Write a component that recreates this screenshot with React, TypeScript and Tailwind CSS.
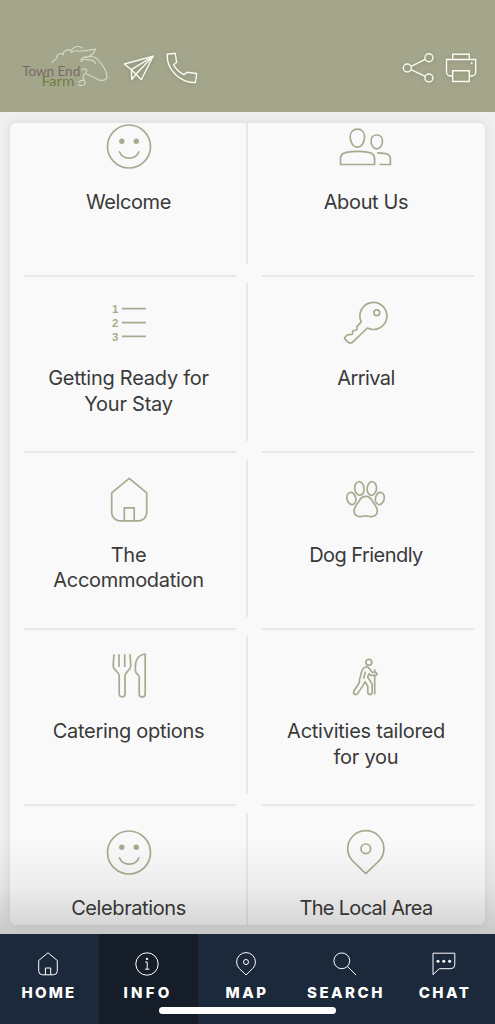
import { ReactNode } from "react";

interface Tile {
  label: string;
  icon: ReactNode;
  tracking: string;
}

interface NavItem {
  label: string;
  icon: ReactNode;
  active?: boolean;
  tracking: string;
}

const Smile = () => (
  <>
    <circle cx="28" cy="23.5" r="21.5" />
    <circle cx="20.8" cy="18.2" r="2.7" fill="currentColor" stroke="none" />
    <circle cx="35.3" cy="18.2" r="2.7" fill="currentColor" stroke="none" />
    <path d="M18.2 28.2a10.7 10.7 0 0 0 20 0" />
  </>
);

const People = () => (
  <>
    <path d="M19.4 6.2c4.3 0 7.2 3 7.2 7.6 0 5.6-3 10.4-7.2 10.4s-7.2-4.8-7.2-10.4c0-4.6 2.9-7.6 7.2-7.6Z" />
    <path d="M2.500 41.500v-5.700c0-4 2.300-5.800 5.700-6.400 7.500-1.500 15-1.500 22.500 0 3.400.6 5.900 2.400 5.900 6.400v5.700Z" />
    <path d="M38.8 12c3.4 0 5.7 2.4 5.7 6 0 4.3-2.3 7.9-5.7 7.9s-5.7-3.6-5.7-7.9c0-3.6 2.3-6 5.7-6Z" />
    <path d="M39 29.8c2.9 0 5.7.3 8.5.8 3.4.6 4.900 2 4.900 5.200v5.700h-11" />
  </>
);

const NumberedList = () => (
  <>
    <path d="M20.8 9.7h24M20.8 23.7h24M20.8 37.3h24" />
    <g fill="currentColor" stroke="none" fontSize="11.5" fontWeight="600" fontFamily="'Liberation Sans', sans-serif" textAnchor="middle">
      <text x="14.2" y="13.8">1</text>
      <text x="14.2" y="28">2</text>
      <text x="14.2" y="42">3</text>
    </g>
  </>
);

const Key = () => (
  <>
    <path d="M23.2 22.7a13.5 13.5 0 1 1 6.2 6.3L14.6 43.2c-1.4 1-3 1-4.5 0-1.4-.9-2.6-2.3-3.6-3.9.6-1.8 1.7-3 3.3-3.6 1.5-.3 3 .3 4.3-.4 1-1 .1-2.5.8-3.5 1.2-1 2.900-.1 3.900-1.100.7-1-.3-2.400.4-3.500 1-1.400 2.500-2.300 4-4.500Z" />
    <circle cx="38.8" cy="13.7" r="2.9" />
  </>
);

const House = () => (
  <>
    <path d="M28.2 2.3 45.7 16.8v20a8 8 0 0 1-8 8h-19a8 8 0 0 1-8-8v-20Z" />
    <path d="M23.3 44.8V31.800h9.900v13" />
  </>
);

const Paw = () => (
  <>
    <ellipse cx="21.4" cy="12.5" rx="4.7" ry="6.800" transform="rotate(-5 21.4 12.5)" />
    <ellipse cx="33.8" cy="12.5" rx="4.7" ry="6.800" transform="rotate(5 33.8 12.5)" />
    <ellipse cx="13.4" cy="22.5" rx="4.4" ry="6.2" transform="rotate(-14 13.4 22.5)" />
    <ellipse cx="41.8" cy="22.5" rx="4.4" ry="6.2" transform="rotate(14 41.8 22.5)" />
    <path d="M27.7 20.3c3.3 0 5.4 2 6.8 5 1.5 3 4.8 5 4.8 9.6 0 4.2-3 6-6.5 5.8-2-.1-3.2-.9-5.1-.9s-3.1.8-5.1.9c-3.5.2-6.5-1.600-6.5-5.800 0-4.600 3.3-6.600 4.8-9.600 1.4-3 3.5-5 6.8-5Z" />
  </>
);

const Cutlery = () => (
  <>
    <path d="M12.9 2.3 12.200 14c0 4 6 6 6 9.500v18.600a2.900 2.900 0 0 0 5.800 0V23.500c0-3.500 5.800-5.500 5.800-9.500l-.8-11.700M18 2.300V15M23.700 2.300V15" />
    <path d="M44.2 2v40.100a3 3 0 0 1-6 0V25c0-3-3.800-2.600-3.800-6.500v-4C34.400 7.500 38 2.700 44.200 2Z" />
  </>
);

const Hiker = () => (
  <>
    <circle cx="30.8" cy="10.3" r="3" />
    <path d="M27.5 15c-2.500.7-3.300 2.700-4 5.200l-1.900 7.200c-.4 1.700 0 2.500-.8 4.100l-4.800 7.300c-.8 1.500-.3 2.800.7 3.400s2.500.2 3.200-1.100l4.700-7 2.400-4.300 2.800 4.300v6.100c0 3 4.300 3 4.300 0v-7.400c0-.9-.3-1.700-.8-2.400l-3.700-5.400 1.500-3.300 1.500 1.700h4.700c2 0 2.200-3.100 0-3.100h-3.200l-2.700-3.600c-1-1.300-2.400-2-3.900-1.700Z" />
    <path d="m27.400 19.500-1.800 7.200M36.700 17.300v3M36.700 24v18.400" />
  </>
);

const Pin = () => (
  <>
    <path d="M27.800 44.600 14.700 32c-3-3-5-7.400-5-12.200a18.100 18.100 0 0 1 36.200 0c0 4.800-2 9.200-5 12.200Z" />
    <circle cx="27.8" cy="19.8" r="4.8" />
  </>
);

const tiles: Tile[] = [
  { label: "Welcome", icon: <Smile />, tracking: "tracking-[-0.4px]" },
  { label: "About Us", icon: <People />, tracking: "tracking-[-0.35px]" },
  { label: "Getting Ready for Your Stay", icon: <NumberedList />, tracking: "tracking-[-0.25px]" },
  { label: "Arrival", icon: <Key />, tracking: "tracking-[-0.6px]" },
  { label: "The Accommodation", icon: <House />, tracking: "tracking-[-0.3px]" },
  { label: "Dog Friendly", icon: <Paw />, tracking: "tracking-[-0.55px]" },
  { label: "Catering options", icon: <Cutlery />, tracking: "tracking-[-0.3px]" },
  { label: "Activities tailored for you", icon: <Hiker />, tracking: "tracking-[-0.25px]" },
  { label: "Celebrations", icon: <Smile />, tracking: "tracking-[-0.4px]" },
  { label: "The Local Area", icon: <Pin />, tracking: "tracking-[-0.7px]" },
];

const navItems: NavItem[] = [
  {
    label: "HOME",
    tracking: "tracking-[2.2px]",
    icon: (
      <>
        <path d="m12 .8 9.300 7.700v10.300a4 4 0 0 1-4 4H6.700a4 4 0 0 1-4-4V8.500Z" />
        <path d="M9.400 22.800V16h5.300v6.800" />
      </>
    ),
  },
  {
    label: "INFO",
    active: true,
    tracking: "tracking-[3.2px]",
    icon: (
      <>
        <circle cx="12" cy="12" r="11.2" />
        <path d="M10.200 10h2v7.200M10 17.200h4.300" />
        <circle cx="12" cy="6.900" r=".8" fill="currentColor" />
      </>
    ),
  },
  {
    label: "MAP",
    tracking: "tracking-[2.5px]",
    icon: (
      <>
        <path d="m12 23-6.700-6.500A9.200 9.200 0 0 1 2.600 10a9.400 9.400 0 0 1 18.800 0c0 2.500-1 4.800-2.700 6.500Z" />
        <circle cx="12" cy="10" r="2.5" />
      </>
    ),
  },
  {
    label: "SEARCH",
    tracking: "tracking-[2.5px]",
    icon: (
      <>
        <circle cx="8.8" cy="8.8" r="7.9" />
        <path d="m14.500 14.500 8.500 8.500" />
      </>
    ),
  },
  {
    label: "CHAT",
    tracking: "tracking-[2.5px]",
    icon: (
      <>
        <path d="M1 22.700V1.200h21.800v11.500a4 4 0 0 1-4 4H7.300Z" />
        <g fill="currentColor" stroke="none">
          <circle cx="6" cy="9.2" r="1.5" />
          <circle cx="11.8" cy="9.2" r="1.5" />
          <circle cx="17.6" cy="9.2" r="1.5" />
        </g>
      </>
    ),
  },
];

function Logo() {
  return (
    <svg viewBox="22 44 86 48" className="w-[86px] h-12" fill="none">
      <g stroke="#d9dbcb" strokeWidth="1.1" strokeLinecap="round">
        <path d="M52 62.500c1.500-2 3-3.400 5-4.500-1-3.500 3-5.700 6-3.500 0-3.500 4.500-6 8-3.800 2-4 8-5.500 11.500-2.700" />
        <path d="M71 52.500c3-2 6.500-2 9-1.500 5 .3 10-1 15.500-2-1.500 4.500-5.500 8-10.500 8.800" />
        <path d="M90 56.500c3.500 0 6.500 1.500 8.500 4 4.500 5 8.500 11 8.500 16 0 3.500-4 5-9 3-3.500-1.500-7-4-11.500-5.500" />
        <path d="M81 61c0-3 3-5 6-4M81 61.500c2-2.500 5-2.500 7-1.500 4-.5 6.500 1 7.500 3.500" />
        <path d="M82 69.500c2.500-1.500 5-.5 4.500 2-.5 3-3.500 3-3.500 6s3.500 3.500 2 6.500c-1.300 2-4 1.700-6.500 1M79 82c1.500-1.500 3.500-2 5.500-1.500" />
      </g>
      <text x="22.2" y="76" fontSize="13.5" textLength="58" fill="#786a67" fontFamily="Lato, sans-serif">Town End</text>
      <text x="41.5" y="86.3" fontSize="13.5" textLength="33" lengthAdjust="spacingAndGlyphs" fill="#6f7f43" fontFamily="Lato, sans-serif">Farm</text>
    </svg>
  );
}

function Header() {
  return (
    <header className="h-[112px] shrink-0 bg-[#a3a68a] pt-6 pl-[22px] pr-[17px] flex items-center justify-between text-[#fafaf2]">
      <div className="flex items-center">
        <Logo />
        <svg viewBox="123 51 32 34" className="ml-[15px] w-8 h-[34px] drop-shadow-sm" fill="none" stroke="currentColor" strokeWidth="1.4" strokeLinejoin="round">
          <path d="m124.300 64 28.800-7.700-11.800 23.500-5.300-5.500-4.200 5.200-.5-9.800Z" />
          <path d="m131.300 69.700 21.800-13.400-17.300 18M131.300 69.700l4.700 4.600" />
        </svg>
        <svg viewBox="165 51 34 34" className="ml-[10px] w-[34px] h-[34px] drop-shadow-sm" fill="none" stroke="currentColor" strokeWidth="1.4" strokeLinejoin="round">
          <path d="m167.200 54.300 8-1 1.500 9.200-3.200 2.300c2.500 4.200 6 7.600 10.400 9.900l2.800-2.500 10 1.300-1.300 9c-15.400.6-29-13.200-28.200-28.200Z" />
        </svg>
      </div>
      <div className="flex items-center">
        <svg viewBox="402 51 32 34" className="w-8 h-[34px] drop-shadow-sm" fill="none" stroke="currentColor" strokeWidth="1.4">
          <circle cx="407.3" cy="68" r="4" />
          <circle cx="428.9" cy="57.7" r="4" />
          <circle cx="428.9" cy="78" r="4" />
          <path d="m411 66.300 14.300-6.900M411 69.700l14.300 6.700" />
        </svg>
        <svg viewBox="444 51 34 34" className="ml-[10px] w-[34px] h-[34px] drop-shadow-sm" fill="none" stroke="currentColor" strokeWidth="1.4">
          <path d="M452.700 59.500v-5.300h16.600v5.300M452.700 76h-2.200a4 4 0 0 1-4-4V59.500h29.200V72a4 4 0 0 1-4 4h-2.400" />
          <path d="M452.700 70.700h16.600v10.800h-16.600z" />
          <circle cx="471.7" cy="63.3" r="1" fill="currentColor" stroke="none" />
        </svg>
      </div>
    </header>
  );
}

function TileCell({ tile, withRule }: { tile: Tile; withRule: boolean }) {
  return (
    <div className="flex h-[176.5px] pl-[14px]">
      <div className="w-[212px] h-[177.5px] border-b-2 border-[#e8e8e8] flex flex-col items-center pt-[23.5px] pl-[15px] pr-[18px]">
        <svg viewBox="0 0 56 48" className="w-14 h-12 shrink-0 text-[#a8aa8f]" fill="none" stroke="currentColor" strokeWidth="1.7" strokeLinejoin="round">
          {tile.icon}
        </svg>
        <div className={`mt-[19px] text-center text-[20px] leading-[25.5px] text-[#3a3a3a] ${tile.tracking}`}>{tile.label}</div>
      </div>
      {withRule && <div className="ml-auto w-[1.5px] mt-[7.5px] mb-[11.5px] bg-[#e8e8e8]" />}
    </div>
  );
}

export default function App() {
  return (
    <div className="h-[1024px] w-[495px] flex flex-col overflow-hidden bg-[#efefef] font-['Inter',sans-serif]">
      <Header />

      <main className="relative flex-1 px-[10px] pt-[11px] pb-[9px] overflow-hidden">
        <div className="h-full rounded-md bg-[#f9f9f9] shadow-[0_0_10px_rgba(0,0,0,0.1)] overflow-hidden">
          <div className="grid grid-cols-2 -mt-6">
            {tiles.map((tile, index) => (
              <TileCell key={tile.label} tile={tile} withRule={index % 2 === 0} />
            ))}
          </div>
        </div>
        {/* fade above the tab bar */}
        <div className="absolute inset-x-0 bottom-0 h-24 bg-gradient-to-t from-black/16 via-black/5 to-transparent" />
      </main>

      <nav className="relative h-[90px] shrink-0 grid grid-cols-5 bg-[#1c293a] text-white">
        {navItems.map((item) => (
          <div key={item.label} className={`flex flex-col items-center pt-[17.5px] pr-[3px] ${item.active ? "bg-[#141d28]" : ""}`}>
            <svg viewBox="0 0 24 24" className="w-6 h-6" fill="none" stroke="currentColor" strokeWidth="1" strokeLinejoin="round">
              {item.icon}
            </svg>
            <span className={`mt-[7.5px] pl-[2px] text-[15px] leading-5 font-extrabold ${item.tracking}`}>{item.label}</span>
          </div>
        ))}
        <div className="absolute left-[159px] top-[73px] w-[177px] h-[6.5px] rounded-full bg-white" />
      </nav>
    </div>
  );
}
